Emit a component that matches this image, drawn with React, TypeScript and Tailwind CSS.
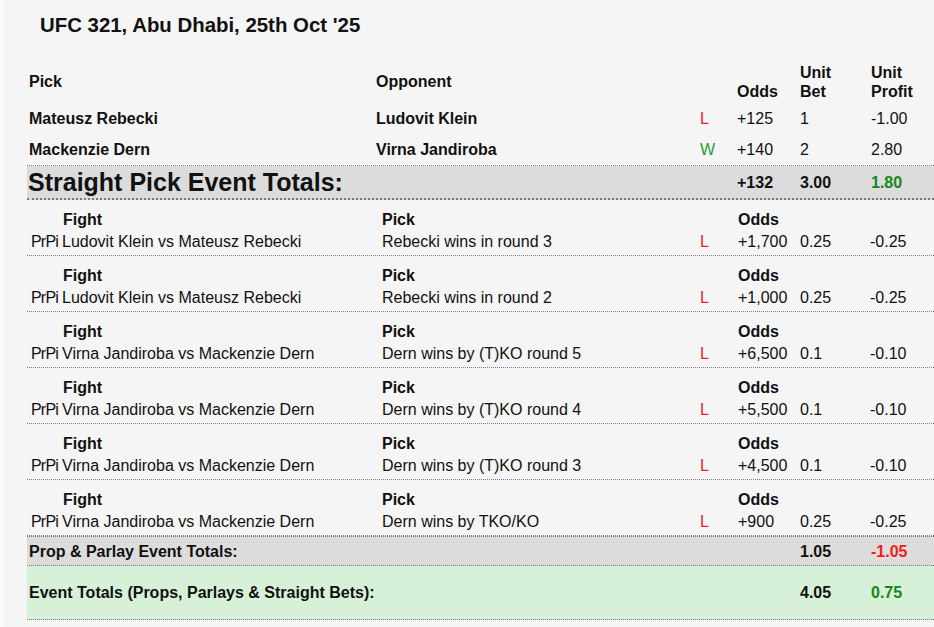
import React from "react";

type Straight = { pick: string; opp: string; res: "L" | "W"; odds: string; bet: string; profit: string };
type Prop = { fight: string; pick: string; odds: string; bet: string; profit: string };

const straights: Straight[] = [
  { pick: "Mateusz Rebecki", opp: "Ludovit Klein", res: "L", odds: "+125", bet: "1", profit: "-1.00" },
  { pick: "Mackenzie Dern", opp: "Virna Jandiroba", res: "W", odds: "+140", bet: "2", profit: "2.80" },
];

const props: Prop[] = [
  { fight: "Ludovit Klein vs Mateusz Rebecki", pick: "Rebecki wins in round 3", odds: "+1,700", bet: "0.25", profit: "-0.25" },
  { fight: "Ludovit Klein vs Mateusz Rebecki", pick: "Rebecki wins in round 2", odds: "+1,000", bet: "0.25", profit: "-0.25" },
  { fight: "Virna Jandiroba vs Mackenzie Dern", pick: "Dern wins by (T)KO round 5", odds: "+6,500", bet: "0.1", profit: "-0.10" },
  { fight: "Virna Jandiroba vs Mackenzie Dern", pick: "Dern wins by (T)KO round 4", odds: "+5,500", bet: "0.1", profit: "-0.10" },
  { fight: "Virna Jandiroba vs Mackenzie Dern", pick: "Dern wins by (T)KO round 3", odds: "+4,500", bet: "0.1", profit: "-0.10" },
  { fight: "Virna Jandiroba vs Mackenzie Dern", pick: "Dern wins by TKO/KO", odds: "+900", bet: "0.25", profit: "-0.25" },
];

const sGrid = "grid grid-cols-[347px_324px_37px_63px_71px_1fr]";
const pGrid = "grid grid-cols-[33px_320px_318px_37px_63px_71px_1fr]";

export default function App() {
  return (
    <div className="w-[934px] h-[627px] overflow-hidden flex bg-[#f5f5f5] text-[#111] font-['Liberation_Sans',Arial,sans-serif] text-[16px] leading-[19px]">
      <div className="w-[4px] bg-[#fbfbfb]" />
      <div className="flex-1 pl-[23px] flex flex-col">
        <h1 className="mt-[14px] pl-[13px] text-[20.4px] leading-[23px] font-bold">UFC 321, Abu Dhabi, 25th Oct '25</h1>

        {/* header */}
        <div className={`${sGrid} mt-[24px] h-[40px] font-bold`}>
          <div className="pl-[2px] self-center">Pick</div>
          <div className="pl-[2px] self-center">Opponent</div>
          <div />
          <div className="pl-[2px] self-end">Odds</div>
          <div className="pl-[2px] self-end">Unit<br />Bet</div>
          <div className="pl-[2px] self-end">Unit<br />Profit</div>
        </div>

        {straights.map((s, i) => (
          <div
            key={i}
            className={`${sGrid} items-center ${i === 0 ? "h-[33px] pt-[2px]" : "h-[32px] border-b border-dotted border-[#7a7a7a]"}`}
          >
            <div className="pl-[2px] font-bold">{s.pick}</div>
            <div className="pl-[2px] font-bold">{s.opp}</div>
            <div className={`pl-[2px] ${s.res === "L" ? "text-[#f21c1c]" : "text-[#2e9a2e]"}`}>{s.res}</div>
            <div className="pl-[2px]">{s.odds}</div>
            <div className="pl-[2px]">{s.bet}</div>
            <div className="pl-[2px]">{s.profit}</div>
          </div>
        ))}

        <div className={`${sGrid} items-center h-[34px] bg-[#dcdcdc] border-b-2 border-dotted border-[#7a7a7a] font-bold`}>
          <div className="col-span-3 pl-[1px] text-[25px] leading-[28px] whitespace-nowrap">Straight Pick Event Totals:</div>
          <div className="pl-[2px]">+132</div>
          <div className="pl-[2px]">3.00</div>
          <div className="pl-[2px] text-[#12891a]">1.80</div>
        </div>

        {props.map((p, i) => (
          <div key={i} className="h-[56px] pt-[10px] border-b border-dotted border-[#7a7a7a] flex flex-col gap-[3px]">
            <div className={`${pGrid} font-bold`}>
              <div />
              <div className="pl-[3px]">Fight</div>
              <div className="pl-[2px]">Pick</div>
              <div />
              <div className="pl-[3px]">Odds</div>
              <div />
              <div />
            </div>
            <div className={pGrid}>
              <div className="pl-[4px] tracking-[-0.8px] whitespace-nowrap overflow-hidden">PrPi</div>
              <div className="pl-[2px]">{p.fight}</div>
              <div className="pl-[2px]">{p.pick}</div>
              <div className="pl-[2px] text-[#f21c1c]">L</div>
              <div className="pl-[3px]">{p.odds}</div>
              <div className="pl-[2px]">{p.bet}</div>
              <div className="pl-[1px]">{p.profit}</div>
            </div>
          </div>
        ))}

        <div className={`${sGrid} items-center h-[30px] bg-[#dcdcdc] border-t border-b border-dotted border-[#7a7a7a] font-bold`}>
          <div className="col-span-4 pl-[2px]">Prop &amp; Parlay Event Totals:</div>
          <div className="pl-[2px]">1.05</div>
          <div className="pl-[2px] text-[#f21c1c]">-1.05</div>
        </div>

        <div className={`${sGrid} items-center h-[54px] bg-[#d7f1d8] border-b border-dotted border-[#7a7a7a] font-bold`}>
          <div className="col-span-4 pl-[2px]">Event Totals (Props, Parlays &amp; Straight Bets):</div>
          <div className="pl-[2px]">4.05</div>
          <div className="pl-[2px] text-[#12891a]">0.75</div>
        </div>
      </div>
    </div>
  );
}
